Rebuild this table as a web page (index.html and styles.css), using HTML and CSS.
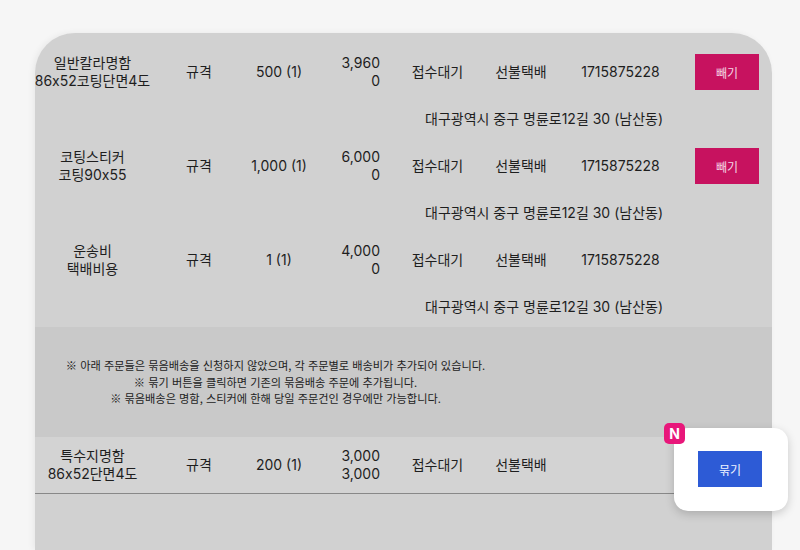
FILE: index.html
```html
<!DOCTYPE html>
<html lang="ko">
<head>
<meta charset="utf-8">
<link rel="stylesheet" href="styles.css">
</head>
<body>
<div class="page">
  <div class="card">
    <div class="item">
      <div class="row">
        <div class="c name">일반칼라명함<br>86x52코팅단면4도</div>
        <div class="c spec">규격</div>
        <div class="c qty">500 (1)</div>
        <div class="c price">3,960<br>0</div>
        <div class="c status">접수대기</div>
        <div class="c ship">선불택배</div>
        <div class="c num">1715875228</div>
        <div class="c act"><button class="btn pink">빼기</button></div>
      </div>
      <div class="addr">대구광역시 중구 명륜로12길 30 (남산동)</div>
    </div>
    <div class="item">
      <div class="row">
        <div class="c name">코팅스티커<br>코팅90x55</div>
        <div class="c spec">규격</div>
        <div class="c qty">1,000 (1)</div>
        <div class="c price">6,000<br>0</div>
        <div class="c status">접수대기</div>
        <div class="c ship">선불택배</div>
        <div class="c num">1715875228</div>
        <div class="c act"><button class="btn pink">빼기</button></div>
      </div>
      <div class="addr">대구광역시 중구 명륜로12길 30 (남산동)</div>
    </div>
    <div class="item">
      <div class="row">
        <div class="c name">운송비<br>택배비용</div>
        <div class="c spec">규격</div>
        <div class="c qty">1 (1)</div>
        <div class="c price">4,000<br>0</div>
        <div class="c status">접수대기</div>
        <div class="c ship">선불택배</div>
        <div class="c num">1715875228</div>
        <div class="c act"></div>
      </div>
      <div class="addr">대구광역시 중구 명륜로12길 30 (남산동)</div>
    </div>
    <div class="notice">
      <p>※ 아래 주문들은 묶음배송을 신청하지 않았으며, 각 주문별로 배송비가 추가되어 있습니다.</p>
      <p>※ 묶기 버튼을 클릭하면 기존의 묶음배송 주문에 추가됩니다.</p>
      <p>※ 묶음배송은 명함, 스티커에 한해 당일 주문건인 경우에만 가능합니다.</p>
    </div>
    <div class="row row-last">
      <div class="c name">특수지명함<br>86x52단면4도</div>
      <div class="c spec">규격</div>
      <div class="c qty">200 (1)</div>
      <div class="c price">3,000<br>3,000</div>
      <div class="c status">접수대기</div>
      <div class="c ship">선불택배</div>
      <div class="c num"></div>
      <div class="c act"></div>
    </div>
    <div class="rest"></div>
  </div>
  <div class="float-panel">
    <span class="badge">N</span>
    <button class="btn blue">묶기</button>
  </div>
</div>
</body>
</html>
```

FILE: styles.css
```css
* { box-sizing: border-box; }
html, body { margin: 0; padding: 0; }
body {
  background: #f6f6f6;
  font-family: Inter, "Noto Sans CJK KR", sans-serif;
  color: #1e1e1e;
  font-size: 14px;
  height: 550px;
  overflow: hidden;
}
.page {
  padding: 33px 28px 0 35px;
  position: relative;
  height: 550px;
}
.card {
  width: 737px;
  background: #d1d1d1;
  border-radius: 40px 40px 0 0;
  padding-top: 12px;
  overflow: hidden;
  height: 517px;
  box-shadow: -2px 0 6px rgba(0,0,0,0.06);
}
.row {
  display: grid;
  grid-template-columns: 115px 98px 62px 80px 95px 72px 127px 86px;
  height: 54px;
  align-items: center;
  line-height: 18px;
}
.c { text-align: center; white-space: nowrap; }
.name { overflow: visible; display: flex; justify-content: center; }
.price { text-align: right; padding-right: 10px; }
.act { display: flex; justify-content: center; }
.addr {
  height: 40px;
  line-height: 40px;
  text-align: right;
  padding-right: 109px;
}
.btn {
  width: 64px;
  height: 36px;
  border: 0;
  font-family: "Noto Sans CJK KR", sans-serif;
  font-size: 12px;
  cursor: pointer;
}
.btn.pink { background: #c7125f; color: #f3d6e4; }
.btn.blue { background: #2d5bd6; color: #eef2ff; }
.notice {
  background: #c9c9c9;
  height: 110px;
  width: 100%;
  display: flex;
  flex-direction: column;
  justify-content: center;
  padding-right: 256px;
  font-family: "Noto Sans CJK KR", sans-serif;
  font-size: 11.2px;
  line-height: 16.5px;
  color: #222;
  text-align: center;
}
.notice p { margin: 0; }
.row-last {
  height: 57px;
  background: #d3d3d3;
  border-bottom: 1px solid #888;
}
.float-panel {
  position: absolute;
  left: 674px;
  top: 428px;
  width: 114px;
  height: 83px;
  background: #fff;
  border-radius: 14px;
  box-shadow: 0 3px 10px rgba(0,0,0,0.18);
  padding: 23px 0 0 24px;
}
.badge {
  position: absolute;
  left: -10px;
  top: -5px;
  width: 21px;
  height: 21px;
  background: #e8177a;
  border-radius: 5px;
  color: #fff;
  font-family: Inter, sans-serif;
  font-weight: 700;
  font-size: 14px;
  line-height: 21px;
  text-align: center;
}
```
